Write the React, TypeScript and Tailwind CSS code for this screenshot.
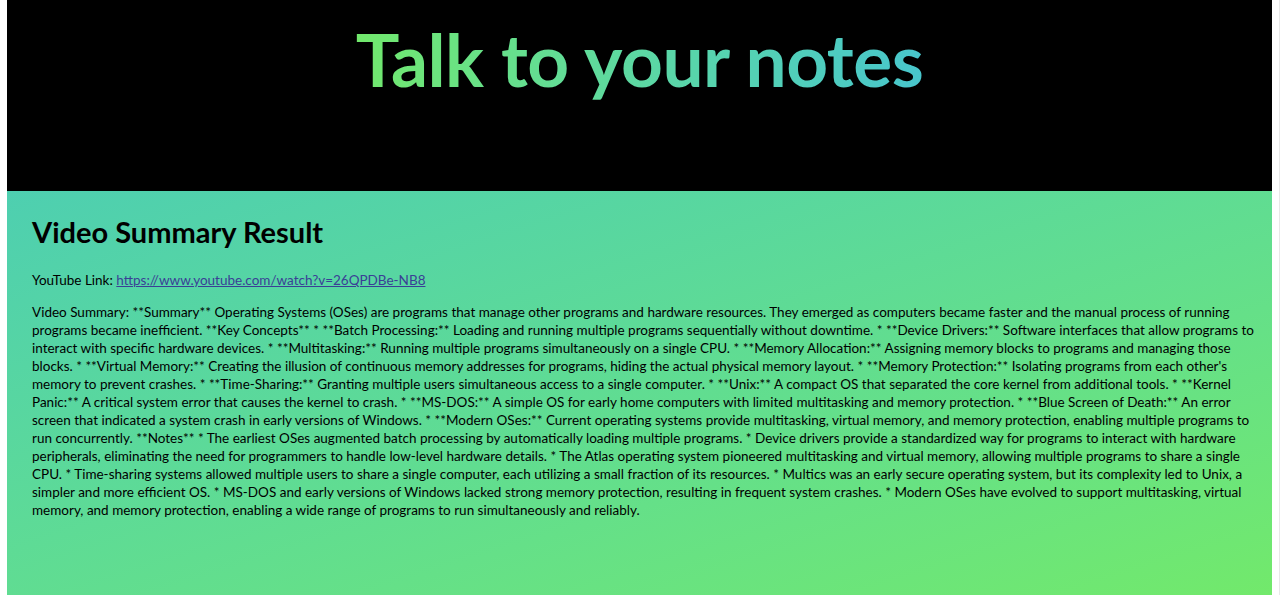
const summary =
  "Video Summary: **Summary** Operating Systems (OSes) are programs that manage other programs and hardware resources. They emerged as computers became faster and the manual process of running programs became inefficient. **Key Concepts** * **Batch Processing:** Loading and running multiple programs sequentially without downtime. * **Device Drivers:** Software interfaces that allow programs to interact with specific hardware devices. * **Multitasking:** Running multiple programs simultaneously on a single CPU. * **Memory Allocation:** Assigning memory blocks to programs and managing those blocks. * **Virtual Memory:** Creating the illusion of continuous memory addresses for programs, hiding the actual physical memory layout. * **Memory Protection:** Isolating programs from each other's memory to prevent crashes. * **Time-Sharing:** Granting multiple users simultaneous access to a single computer. * **Unix:** A compact OS that separated the core kernel from additional tools. * **Kernel Panic:** A critical system error that causes the kernel to crash. * **MS-DOS:** A simple OS for early home computers with limited multitasking and memory protection. * **Blue Screen of Death:** An error screen that indicated a system crash in early versions of Windows. * **Modern OSes:** Current operating systems provide multitasking, virtual memory, and memory protection, enabling multiple programs to run concurrently. **Notes** * The earliest OSes augmented batch processing by automatically loading multiple programs. * Device drivers provide a standardized way for programs to interact with hardware peripherals, eliminating the need for programmers to handle low-level hardware details. * The Atlas operating system pioneered multitasking and virtual memory, allowing multiple programs to share a single CPU. * Time-sharing systems allowed multiple users to share a single computer, each utilizing a small fraction of its resources. * Multics was an early secure operating system, but its complexity led to Unix, a simpler and more efficient OS. * MS-DOS and early versions of Windows lacked strong memory protection, resulting in frequent system crashes. * Modern OSes have evolved to support multitasking, virtual memory, and memory protection, enabling a wide range of programs to run simultaneously and reliably."

export default function App() {
  return (
    <div className="min-h-[595px] bg-white pl-[7px] pr-[7px] border-r border-[#e8e8e8] font-['Lato',sans-serif] text-black">
      {/* header */}
      <header className="h-[191px] bg-black flex justify-center pt-[9px]">
        <h1 className="text-[73px] leading-[100px] font-bold tracking-[-0.5px] bg-gradient-to-r from-[#72e86c] to-[#48c6cc] bg-clip-text text-transparent">
          Talk to your notes
        </h1>
      </header>

      {/* result */}
      <section className="min-h-[404px] bg-gradient-to-br from-[#4ecfb0] to-[#72e96b] pl-[25px] pr-[12px] pt-[23px] pb-8">
        <h2 className="text-[29px] leading-[36px] font-bold mb-[21px]">Video Summary Result</h2>
        <p className="text-[13.5px] leading-[18px] mb-[14px]">
          YouTube Link:{' '}
          <a href="#" className="text-[#3a3f96] underline">
            https://www.youtube.com/watch?v=26QPDBe-NB8
          </a>
        </p>
        <p className="text-[13.5px] leading-[18px]">{summary}</p>
      </section>
    </div>
  )
}
